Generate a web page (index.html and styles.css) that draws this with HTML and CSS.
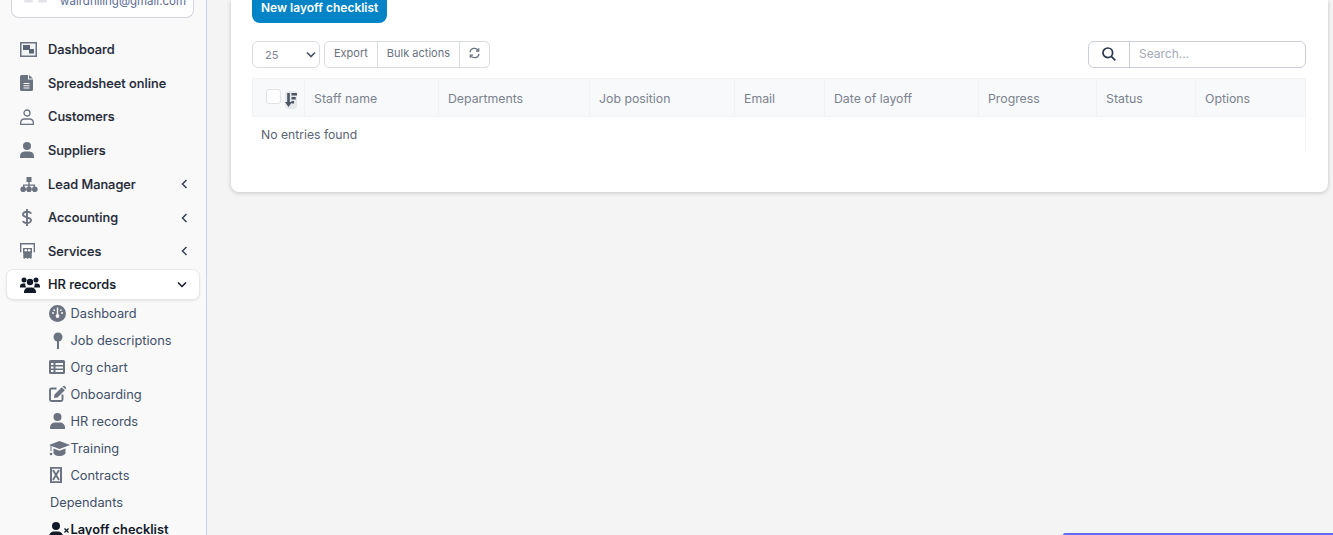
FILE: index.html
```html
<!DOCTYPE html>
<html lang="en">
<head>
<meta charset="utf-8">
<title>Layoff checklist</title>
<link rel="stylesheet" href="styles.css">
</head>
<body>
<div class="app">
  <aside class="sidebar">
    <div class="user-card">
      <svg class="user-avatar" width="24" height="3" viewBox="0 0 24 3"><rect x="0" y="0" width="9" height="2.500" rx="1.200" fill="#e2e4e8"/><rect x="14" y="0" width="9" height="2.500" rx="1.200" fill="#e2e4e8"/></svg>
      <span class="user-email">wairdhiling@gmail.com</span>
    </div>
    <nav class="menu">
      <a class="menu-item"><span class="menu-icon"><svg width="17" height="15" viewBox="0 0 17 15"><rect width="17" height="15" fill="#6b7280"/><rect x="1.500" y="1.500" width="14" height="12" fill="#f3f4f6"/><path fill="#5b6472" d="M3 3h7v5H3zM9 7h5v4.500H9z"/></svg></span><span class="menu-label">Dashboard</span></a>
      <a class="menu-item"><span class="menu-icon"><svg width="13" height="16" viewBox="0 0 13 16"><path fill="#6b7280" fill-rule="evenodd" d="M1.500 0H8v4.500h5V14.500a1.500 1.500 0 0 1-1.500 1.500h-10A1.500 1.500 0 0 1 0 14.500v-13A1.500 1.500 0 0 1 1.500 0zM3.500 8v1h6V8zm0 2.200v1h6v-1zm0 2.200v1h6v-1z"/><path fill="#6b7280" d="M9 0l4 3.500H9z"/></svg></span><span class="menu-label">Spreadsheet online</span></a>
      <a class="menu-item"><span class="menu-icon"><svg width="14" height="16" viewBox="0 0 14 16" fill="none" stroke="#6b7280" stroke-width="1.300"><circle cx="7" cy="4" r="3"/><path d="M.7 15.300v-1.800A3.500 3.500 0 0 1 4.200 10h5.600a3.500 3.500 0 0 1 3.500 3.500v1.800z"/></svg></span><span class="menu-label">Customers</span></a>
      <a class="menu-item"><span class="menu-icon"><svg width="14" height="16" viewBox="0 0 14 16" fill="#6b7280"><circle cx="7" cy="4" r="4"/><path d="M0 14.500A5 5 0 0 1 4.500 9.500h5A5 5 0 0 1 14 14.500V16H0z"/></svg></span><span class="menu-label">Suppliers</span></a>
      <a class="menu-item"><span class="menu-icon"><svg width="18" height="15" viewBox="0 0 18 15" fill="#6b7280"><path d="M6.500 0h5v5h-5zM8.300 5h1.400v2.500H15V10h-1.400V8.800H9.700V10H8.300V8.800H4.400V10H3V7.500h5.300z"/><circle cx="3.200" cy="12.200" r="2.800"/><circle cx="9" cy="12.200" r="2.800"/><circle cx="14.800" cy="12.200" r="2.800"/></svg></span><span class="menu-label">Lead Manager</span><svg class="chevron-left" width="7" height="10" viewBox="0 0 7 10"><path d="M5.500 1L1.500 5l4 4" fill="none" stroke="#374151" stroke-width="1.500"/></svg></a>
      <a class="menu-item"><span class="menu-icon menu-icon-dollar"><svg width="10" height="17" viewBox="0 0 10 17"><path d="M9 4.700C8.500 3.300 7 2.700 5 2.700S1 3.700 1 5.500C1 9.300 9 7.400 9 11.200c0 1.700-2 2.900-4 2.900s-3.500-.7-4-2.100M5 0v17" fill="none" stroke="#6b7280" stroke-width="1.900"/></svg></span><span class="menu-label">Accounting</span><svg class="chevron-left" width="7" height="10" viewBox="0 0 7 10"><path d="M5.500 1L1.500 5l4 4" fill="none" stroke="#374151" stroke-width="1.500"/></svg></a>
      <a class="menu-item"><span class="menu-icon"><svg width="15" height="16" viewBox="0 0 15 16"><path d="M.7 9.300V.7h13.600v8.600" fill="#fff" stroke="#6b7280" stroke-width="1.400"/><path fill="#6b7280" d="M3 5h9v5h-.3v4.800a1 1 0 0 1-2 0 1 1 0 0 1-.2.200H8.500v-.2a1 1 0 0 1-2 0V15h-1a1 1 0 0 1-.2-.2 1 1 0 0 1-2 0V10H3z"/><circle cx="5.800" cy="7.300" r="1.300" fill="#fff"/><circle cx="9.200" cy="7.300" r="1.300" fill="#fff"/></svg></span><span class="menu-label">Services</span><svg class="chevron-left" width="7" height="10" viewBox="0 0 7 10"><path d="M5.500 1L1.500 5l4 4" fill="none" stroke="#374151" stroke-width="1.500"/></svg></a>
      <a class="menu-item menu-item-open"><span class="menu-icon"><svg width="20" height="16" viewBox="0 0 20 16" fill="#111827"><circle cx="4" cy="3" r="2.500"/><circle cx="16" cy="3" r="2.500"/><circle cx="10" cy="5" r="3.200"/><path d="M0 9.500a3 3 0 0 1 3-3h2.300A4.500 4.500 0 0 0 6.500 10.500H0zM20 9.500a3 3 0 0 0-3-3h-2.300A4.500 4.500 0 0 1 13.500 10.500H20zM4 15a4.500 4.500 0 0 1 4.500-4.500h3A4.500 4.500 0 0 1 16 15v1H4z"/></svg></span><span class="menu-label">HR records</span><svg class="chevron-down" width="10" height="7" viewBox="0 0 10 7"><path d="M1 1.500l4 4 4-4" fill="none" stroke="#111827" stroke-width="1.500"/></svg></a>
    </nav>
    <nav class="submenu">
      <a class="sub-item"><span class="sub-icon"><svg width="17" height="17" viewBox="0 0 17 17"><circle cx="8.500" cy="8.500" r="8.500" fill="#6b7280"/><path d="M8.500 9V2.500M3 8h2M12 8h2M4.500 4.500l1.300 1.300M12.500 4.500l-1.300 1.300" stroke="#f9fafb" stroke-width="1.400"/><circle cx="8.500" cy="11" r="1.900" fill="#f9fafb"/></svg></span>Dashboard</a>
      <a class="sub-item"><span class="sub-icon sub-icon-pin"><svg width="10" height="17" viewBox="0 0 10 17" fill="#6b7280"><circle cx="5" cy="5" r="4.500"/><rect x="4" y="9" width="2" height="8"/></svg></span>Job descriptions</a>
      <a class="sub-item"><span class="sub-icon"><svg width="16" height="14" viewBox="0 0 16 14"><path fill="#6b7280" fill-rule="evenodd" d="M1.500 0h13A1.500 1.500 0 0 1 16 1.500v11a1.500 1.500 0 0 1-1.500 1.500h-13A1.500 1.500 0 0 1 0 12.500v-11A1.500 1.500 0 0 1 1.500 0zM2 3v2h2.500V3zm4.500 0v2H14V3zM2 6.500v2h2.500v-2zm4.500 0v2H14v-2zM2 10v2h2.500v-2zm4.500 0v2H14v-2z"/></svg></span>Org chart</a>
      <a class="sub-item"><span class="sub-icon"><svg width="17" height="16" viewBox="0 0 17 16"><path d="M7.500 2.500h-5A1.500 1.500 0 0 0 1 4v9.500A1.500 1.500 0 0 0 2.500 15H12a1.500 1.500 0 0 0 1.500-1.500v-5" fill="none" stroke="#6b7280" stroke-width="1.900"/><path fill="#6b7280" d="M5.500 8.500L12.800 1.200l3 3L8.500 11.500l-3.500.5zM13.500.5l.7-.5a1 1 0 0 1 1.400 0l1.200 1.200a1 1 0 0 1 0 1.400l-.5.7z"/></svg></span>Onboarding</a>
      <a class="sub-item"><span class="sub-icon sub-icon-center"><svg width="15" height="16" viewBox="0 0 15 16" fill="#6b7280"><circle cx="7.500" cy="4" r="4"/><path d="M0 14.500A5 5 0 0 1 5 9.500h5a5 5 0 0 1 5 5V16H0z"/></svg></span>HR records</a>
      <a class="sub-item"><span class="sub-icon-wide"><svg width="21" height="15" viewBox="0 0 21 15" fill="#6b7280"><path d="M10.500 0L21 4l-10.500 4L2.500 5v5H1.500V4.600L0 4z"/><path d="M4.500 7.500l6 2.300 6-2.300V12c0 1.500-2.700 3-6 3s-6-1.500-6-3z"/><circle cx="2" cy="13" r="1.300"/></svg></span>Training</a>
      <a class="sub-item"><span class="sub-icon sub-icon-center"><svg width="12" height="16" viewBox="0 0 12 16"><path fill="#6b7280" fill-rule="evenodd" d="M0 0h12v16H0zM2 1.800v12.400h8V1.800z"/><path d="M3 3l6 10M9 3l-6 10" stroke="#6b7280" stroke-width="1.900"/></svg></span>Contracts</a>
      <a class="sub-item sub-item-plain">Dependants</a>
      <a class="sub-item sub-item-active"><span class="sub-icon-wide"><svg width="21" height="16" viewBox="0 0 21 16" fill="#111827"><circle cx="7" cy="4" r="4"/><path d="M0 14.500A5 5 0 0 1 5 9.500h4a5 5 0 0 1 5 5V16H0z"/><path d="M15.500 6.500l4 4M19.500 6.500l-4 4" stroke="#111827" stroke-width="1.300"/></svg></span>Layoff checklist</a>
    </nav>
  </aside>
  <main class="content">
    <section class="card">
      <button class="btn-primary">New layoff checklist</button>
      <div class="toolbar">
        <div class="toolbar-left">
          <div class="length-select"><span>25</span><svg width="10" height="7" viewBox="0 0 10 7"><path d="M1 1.500l4 4 4-4" fill="none" stroke="#4b5563" stroke-width="1.700"/></svg></div>
          <div class="btn-group">
            <span class="btn-tool">Export</span>
            <span class="btn-tool">Bulk actions</span>
            <span class="btn-tool btn-icon"><svg width="12" height="12" viewBox="0 0 12 12" fill="none" stroke="#6b7280" stroke-width="1.400"><path d="M1 5A5 5 0 0 1 10 3M11 7a5 5 0 0 1-9 2"/><path d="M10.600.8v3H7.600M1.400 11.200v-3h3"/></svg></span>
          </div>
        </div>
        <div class="search">
          <span class="search-icon"><svg width="14" height="14" viewBox="0 0 14 14" fill="none" stroke="#27364b" stroke-width="1.700"><circle cx="5.800" cy="5.800" r="4.800"/><path d="M9.300 9.300l4 4"/></svg></span>
          <span class="search-input">Search...</span>
        </div>
      </div>
      <div class="table">
        <div class="table-head">
          <div class="th th-check"><span class="checkbox"></span><span class="sort-badge"><svg width="12" height="14" viewBox="0 0 12 14" fill="#4b5563"><path d="M2.200 0h2.600v9H7l-3.500 5L0 9h2.200zM6.500 0H12v2.400H6.500zM6.500 4h4.200v2.400H6.500zM6.500 8H9v2.400H6.500z"/></svg></span></div>
          <div class="th th-staff">Staff name</div>
          <div class="th th-dept">Departments</div>
          <div class="th th-job">Job position</div>
          <div class="th th-email">Email</div>
          <div class="th th-date">Date of layoff</div>
          <div class="th th-progress">Progress</div>
          <div class="th th-status">Status</div>
          <div class="th th-options">Options</div>
        </div>
        <div class="table-empty">No entries found</div>
      </div>
    </section>
  </main>
</div>
<div class="chat-bar"></div>
</body>
</html>
```

FILE: styles.css
```css
* {
  box-sizing: border-box;
}

html,
body {
  margin: 0;
  height: 535px;
  overflow: hidden;
}

body {
  background: #f4f4f4;
  font-family: Inter, "Liberation Sans", sans-serif;
  font-size: 13px;
  color: #4b5563;
}

.app {
  display: flex;
  align-items: flex-start;
  height: 535px;
}

.sidebar {
  flex: 0 0 207px;
  height: 535px;
  background: #f9f9fa;
  border-right: 1px solid #c7d2e8;
  padding: 0 6px;
  overflow: hidden;
}

.user-card {
  display: flex;
  justify-content: space-between;
  height: 18px;
  margin: 0 6px 14.900px 5px;
  padding: 0 7px 0 12px;
  background: #fff;
  border: 1px solid #d1d5db;
  border-top: 0;
  border-radius: 0 0 8px 8px;
}

.user-avatar {
  flex: none;
}

.user-email {
  margin-top: -6px;
  color: #5b6b94;
  font-size: 11.500px;
  line-height: 14px;
  white-space: nowrap;
}

.menu {
  display: flex;
  flex-direction: column;
}

.menu-item {
  display: flex;
  align-items: center;
  height: 33.600px;
  padding: 0 12px 0 13px;
  color: #1f2937;
  font-size: 12.800px;
  font-weight: 500;
  -webkit-text-stroke: 0.150px #1f2937;
}

.menu-icon {
  display: flex;
  flex: 0 0 29px;
  align-items: center;
  padding-left: 1px;
}

.menu-icon-dollar {
  padding-left: 3px;
}

.menu-label {
  flex: 1;
}

.menu-item-open {
  height: 31px;
  margin-top: 1px;
  background: #fff;
  border: 1px solid #e5e7eb;
  border-radius: 7px;
  box-shadow: 0 1px 2px rgba(0, 0, 0, 0.08);
  padding-left: 12px;
  color: #111827;
}

.submenu {
  display: flex;
  flex-direction: column;
  margin-top: -0.500px;
}

.sub-item {
  display: flex;
  align-items: center;
  height: 27px;
  padding-left: 43px;
  color: #3f4f68;
  font-size: 12.800px;
}

.sub-icon {
  display: flex;
  flex: 0 0 21.500px;
  align-items: center;
}

.sub-icon-center {
  padding-left: 1px;
}

.sub-icon-pin {
  padding-left: 4px;
}

.sub-icon-wide {
  display: flex;
  flex: 0 0 21.500px;
  align-items: center;
}

.sub-item-plain {
  padding-left: 44px;
}

.sub-item-active {
  padding-top: 1px;
  color: #111827;
  font-weight: 600;
}

.content {
  flex: 1;
  min-width: 0;
  padding: 0 5px 0 24px;
}

.card {
  height: 192px;
  background: #fff;
  border-radius: 0 0 8px 8px;
  box-shadow: 0 1px 4px rgba(0, 0, 0, 0.2);
  padding: 0 22px 0 21px;
  overflow: hidden;
}

.btn-primary {
  display: block;
  height: 23px;
  padding: 0 9px 9px;
  background: #0284c7;
  border: 0;
  border-radius: 0 0 8px 8px;
  color: #fff;
  font-family: inherit;
  font-size: 12px;
  font-weight: 600;
  line-height: 15px;
}

.toolbar {
  display: flex;
  align-items: stretch;
  justify-content: space-between;
  height: 27px;
  margin-top: 18px;
}

.toolbar-left {
  display: flex;
  gap: 4px;
}

.length-select {
  display: flex;
  align-items: center;
  justify-content: space-between;
  width: 68px;
  padding: 0 3px 0 12px;
  background: #fff;
  border: 1px solid #d9dce1;
  border-radius: 6px;
  color: #7b8290;
  font-size: 11px;
}

.btn-group {
  display: flex;
  border: 1px solid #d9dce1;
  border-radius: 5px;
}

.btn-tool {
  display: flex;
  align-items: center;
  padding: 0 9px 3px;
  color: #6b7280;
  font-size: 11px;
  border-left: 1px solid #d9dce1;
}

.btn-tool:first-child {
  border-left: 0;
}

.btn-icon {
  width: 30px;
}

.search {
  display: flex;
  width: 218px;
  border: 1px solid #c9ced8;
  border-radius: 6px;
}

.search-icon {
  display: flex;
  flex: 0 0 41px;
  align-items: center;
  justify-content: center;
  padding-bottom: 2px;
  border-right: 1px solid #c9ced8;
}

.search-input {
  display: flex;
  align-items: center;
  padding: 0 0 2px 9px;
  color: #a3a9b5;
  font-size: 12px;
}

.table {
  height: 74px;
  margin-top: 10px;
  border-right: 1px solid #f1f2f4;
}

.table-head {
  display: flex;
  height: 39px;
  background: #f8f9fa;
  border: 1px solid #f1f2f4;
  border-right: 0;
}

.th {
  display: flex;
  align-items: center;
  padding: 1px 0 0 9px;
  color: #7b8290;
  font-size: 12.300px;
  border-right: 1px solid #f1f2f4;
}

.th:last-child {
  border-right: 0;
}

.th-check {
  width: 52px;
  padding: 0 0 0 13px;
}

.checkbox {
  flex: none;
  width: 15px;
  height: 15px;
  background: #fff;
  border: 1px solid #e1e3e7;
  border-radius: 3px;
  margin-top: -2px;
}

.sort-badge {
  display: flex;
  align-items: center;
  justify-content: center;
  width: 12px;
  height: 18px;
  margin: 5px 0 0 4px;
  background: #e5e7eb;
  border-radius: 4px;
}

.th-staff {
  width: 134px;
}

.th-dept {
  width: 151px;
}

.th-job {
  width: 145px;
}

.th-email {
  width: 90px;
}

.th-date {
  width: 154px;
}

.th-progress {
  width: 118px;
}

.th-status {
  width: 99px;
}

.th-options {
  flex: 1;
}

.table-empty {
  padding: 10px 9px 0;
  color: #5b6472;
  font-size: 12.200px;
  line-height: 15px;
}

.chat-bar {
  position: absolute;
  left: 1063px;
  top: 533px;
  width: 270px;
  height: 2px;
  background: #5b6ff0;
  border-radius: 3px 0 0 0;
}
```
